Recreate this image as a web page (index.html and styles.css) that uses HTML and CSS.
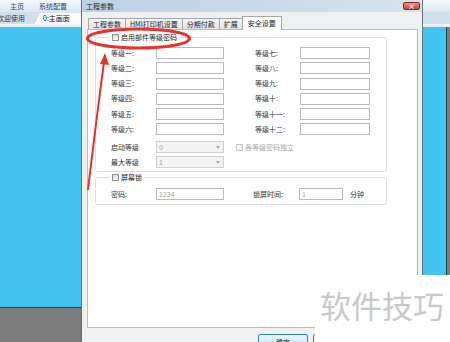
FILE: index.html
```html
<!DOCTYPE html>
<html>
<head>
    <meta charset="utf-8">
    <title>工程参数</title>
    <link rel="stylesheet" href="styles.css">
</head>
<body>

<div class="app">
    <div class="menubar"><span>主页</span><span>系统配置</span></div>
    <div class="tabbar">
        <span class="doc-tab">欢迎使用</span>
        <span class="doc-tab active">0:主画面</span>
    </div>
    <div class="canvas"></div>
</div>

<div class="dialog">
    <div class="titlebar">
        <span>工程参数</span>
        <span class="close">×</span>
    </div>
    <div class="client">
        <div class="tabs">
            <span class="tab">工程参数</span>
            <span class="tab">HMI打印机设置</span>
            <span class="tab">分期付款</span>
            <span class="tab">扩展</span>
            <span class="tab active">安全设置</span>
        </div>
        <div class="panel">
            <div class="group levels-group">
                <label class="legend"><span class="check"></span>启用部件等级密码</label>
                <div class="levels">
                    <span class="label">等级一:</span><span class="input"></span>
                    <span class="label right">等级七:</span><span class="input wide"></span>
                    <span class="label">等级二:</span><span class="input"></span>
                    <span class="label right">等级八:</span><span class="input wide"></span>
                    <span class="label">等级三:</span><span class="input"></span>
                    <span class="label right">等级九:</span><span class="input wide"></span>
                    <span class="label">等级四:</span><span class="input"></span>
                    <span class="label right">等级十:</span><span class="input wide"></span>
                    <span class="label">等级五:</span><span class="input"></span>
                    <span class="label right">等级十一:</span><span class="input wide"></span>
                    <span class="label">等级六:</span><span class="input"></span>
                    <span class="label right">等级十二:</span><span class="input wide"></span>
                </div>
                <div class="ranges">
                    <span class="label">启动等级</span>
                    <span class="select"><span>0</span><i class="arrow"></i></span>
                    <label class="opt"><span class="check off"></span>各等级密码独立</label>
                    <span class="label">最大等级</span>
                    <span class="select"><span>1</span><i class="arrow"></i></span>
                </div>
            </div>

            <div class="group lock-group">
                <label class="legend"><span class="check"></span>屏幕锁</label>
                <div class="lock-row">
                    <span class="label">密码:</span>
                    <span class="input value">1234</span>
                    <span class="label right">锁屏时间:</span>
                    <span class="input short value">1</span>
                    <span class="unit">分钟</span>
                </div>
            </div>
        </div>
        <div class="buttons">
            <button class="btn default">确定</button>
            <button class="btn">取消</button>
            <button class="btn">应用</button>
        </div>
    </div>
</div>

<svg class="marks" width="450" height="342" viewBox="0 0 450 342">
    <ellipse cx="138.5" cy="38.5" rx="51" ry="9.5" fill="none" stroke="#e4332b" stroke-width="3"/>
    <path d="M88 190 Q95 130 104 62" fill="none" stroke="#e4332b" stroke-width="2"/>
    <polygon points="105,53 100,64 109,65" fill="#e4332b"/>
</svg>

<div class="watermark">软件技巧</div>

</body>
</html>
```

FILE: styles.css
```css
* {
    box-sizing: border-box;
}

body {
    margin: 0;
    width: 450px;
    height: 342px;
    overflow: hidden;
    position: relative;
    background: #7d7d7d;
    font-family: "Noto Sans CJK SC", "Noto Sans", sans-serif;
    font-size: 7px;
    line-height: 1;
    color: #333;
}

/* editor behind the dialog */
.menubar {
    height: 12px;
    display: flex;
    align-items: center;
    gap: 15px;
    padding-left: 10px;
    background: linear-gradient(#f5f8fb, #dce6f1);
    color: #28467a;
}

.tabbar {
    height: 15px;
    display: flex;
    align-items: flex-end;
    gap: 6px;
    background: #d3dfec;
    border-bottom: 3px solid #eef1f5;
}

.doc-tab {
    height: 11px;
    display: flex;
    align-items: center;
    padding: 0 4px;
    color: #333;
}

.doc-tab:first-child {
    margin-left: -7px;
}

.doc-tab.active {
    width: 46px;
    padding-left: 8px;
    background: #fff;
    clip-path: polygon(5px 0, 100% 0, 100% 100%, 0 100%);
    color: #111;
}

.canvas {
    width: 447px;
    height: 281px;
    background: #41c4ef;
    border-right: 1px solid #203c4a;
    border-bottom: 1px solid #203c4a;
}

/* dialog */
.dialog {
    position: absolute;
    left: 81px;
    top: 0;
    width: 342px;
    height: 360px;
    border: 1px solid #66717e;
    border-top: none;
    background: #eef0f2;
}

.titlebar {
    height: 12px;
    display: flex;
    align-items: center;
    padding: 0 2px 0 4px;
    background: linear-gradient(90deg, #bdd0e5, #d7e3ef);
    color: #1c1c1c;
}

.close {
    margin-left: auto;
    width: 17px;
    height: 8px;
    display: flex;
    align-items: center;
    justify-content: center;
    border: 1px solid #7b2c24;
    border-radius: 2px;
    background: linear-gradient(#e49a8b, #c3412f);
    color: #fff;
    font-size: 7px;
    font-weight: bold;
}

.client {
    padding: 0 4px 0 5px;
}

.tabs {
    height: 17px;
    display: flex;
    align-items: flex-end;
    padding-left: 1px;
}

.tab {
    height: 11px;
    display: flex;
    align-items: center;
    padding: 0 4px;
    margin-right: -1px;
    border: 1px solid #a3a7ab;
    border-bottom: none;
    background: linear-gradient(#f6f6f6, #e2e2e2);
    color: #222;
}

.tab.active {
    height: 14px;
    margin-bottom: -1px;
    padding: 0 5px;
    position: relative;
    background: #fff;
}

.panel {
    height: 299px;
    padding: 7px 0 0 7px;
    border: 1px solid #b9bdc2;
    background: #fff;
}

.group {
    position: relative;
    width: 292px;
    border: 1px solid #dcdfe2;
    border-radius: 3px;
    padding-left: 15px;
}

.levels-group {
    height: 135px;
    padding-top: 9px;
}

.lock-group {
    height: 28px;
    margin-top: 5px;
    padding-top: 10px;
}

.legend {
    position: absolute;
    top: -4px;
    left: 14px;
    display: flex;
    align-items: center;
    gap: 2px;
    padding: 0 2px;
    background: #fff;
    color: #222;
}

.check {
    width: 7px;
    height: 7px;
    border: 1px solid #8e8f90;
    background: linear-gradient(#dedede, #f8f8f8);
}

.check.off {
    border-color: #c4c4c4;
    background: #f6f6f6;
}

.levels {
    display: grid;
    grid-template-columns: 45px 68px 76px 70px;
    grid-auto-rows: 12px;
    row-gap: 3.3px;
}

.label {
    display: flex;
    align-items: center;
    color: #333;
}

.label.right {
    padding-left: 31px;
}

.input {
    height: 12px;
    border: 1px solid #b6babf;
    background: #fff;
}

.input.value {
    display: flex;
    align-items: center;
    padding-left: 2px;
    color: #9b9b9b;
}

.ranges {
    display: grid;
    grid-template-columns: 45px 68px auto;
    grid-auto-rows: 12px;
    row-gap: 3px;
    margin-top: 5.9px;
}

.select {
    display: flex;
    align-items: center;
    justify-content: space-between;
    padding: 0 3px 0 2px;
    border: 1px solid #d0d0d0;
    background: #f4f4f4;
    color: #a0a0a0;
}

.arrow {
    width: 0;
    height: 0;
    border-left: 2.5px solid transparent;
    border-right: 2.5px solid transparent;
    border-top: 3px solid #a8a8a8;
}

.opt {
    display: flex;
    align-items: center;
    gap: 2px;
    margin-left: 12px;
    color: #a6a6a6;
}

.lock-row {
    display: grid;
    grid-template-columns: 45px 68px 75px 44px auto;
    grid-template-rows: 12px;
}

.lock-row .label.right {
    padding-left: 29px;
}

.unit {
    display: flex;
    align-items: center;
    margin-left: 7px;
    color: #333;
}

.buttons {
    display: flex;
    justify-content: flex-end;
    gap: 5px;
    margin-top: 6px;
}

.btn {
    width: 50px;
    height: 15px;
    padding: 0;
    border: 1px solid #707070;
    border-radius: 2px;
    background: linear-gradient(#f3f3f3, #dcdcdc);
    font-family: inherit;
    font-size: 7px;
    color: #111;
}

.btn.default {
    border-color: #3c7fb1;
    background: linear-gradient(#eaf6fd, #bde4fa);
}

/* screenshot annotations */
.marks {
    position: absolute;
    left: 0;
    top: 0;
    pointer-events: none;
}

.watermark {
    position: absolute;
    left: 315px;
    top: 275px;
    width: 135px;
    height: 67px;
    padding: 14px 0 0 5px;
    background: #fff;
    color: #c9c9c9;
    font-size: 31px;
    white-space: nowrap;
}
```
